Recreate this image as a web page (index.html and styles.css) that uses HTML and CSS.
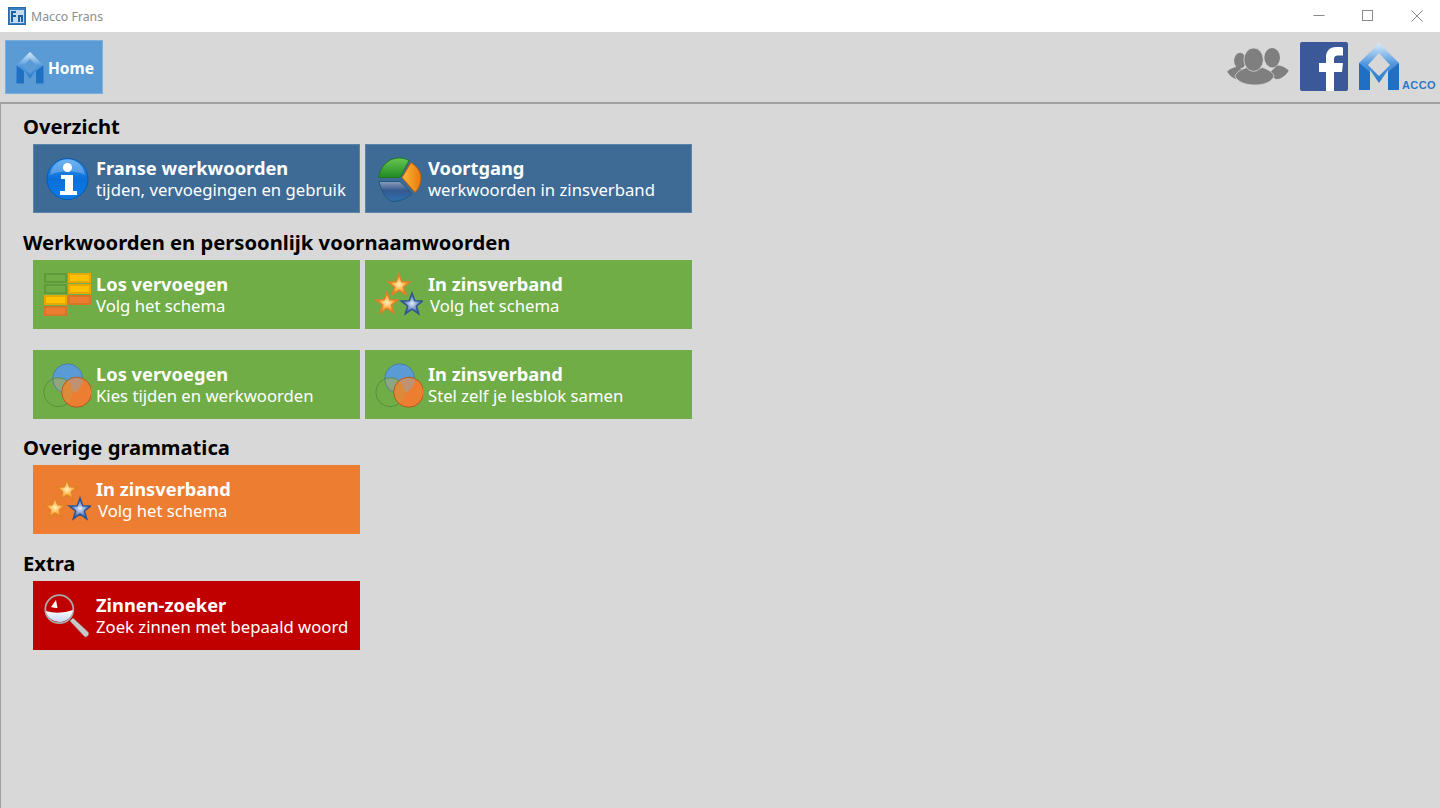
FILE: index.html
```html
<!DOCTYPE html>
<html lang="en">
<head>
    <meta charset="UTF-8">
    <meta name="viewport" content="width=device-width, initial-scale=1.0">
    <title>Macco Frans</title>
    <link rel="stylesheet" href="styles.css">
</head>
<body>
    <svg class="defs" width="0" height="0" aria-hidden="true">
        <defs>
            <linearGradient id="gInfo" x1="0" y1="0" x2="0" y2="1">
                <stop offset="0" stop-color="#3f9cf0"/>
                <stop offset="0.5" stop-color="#0a6fd8"/>
                <stop offset="1" stop-color="#0a7ce8"/>
            </linearGradient>
            <linearGradient id="gGreen" x1="0" y1="0" x2="0" y2="1">
                <stop offset="0" stop-color="#6cc653"/>
                <stop offset="1" stop-color="#1f8a22"/>
            </linearGradient>
            <linearGradient id="gOrange" x1="0" y1="0" x2="1" y2="0">
                <stop offset="0" stop-color="#ffb83c"/>
                <stop offset="1" stop-color="#e87a0a"/>
            </linearGradient>
            <linearGradient id="gBlue" x1="0" y1="0" x2="0" y2="1">
                <stop offset="0" stop-color="#8a9cb8"/>
                <stop offset="0.45" stop-color="#34598f"/>
                <stop offset="1" stop-color="#2f6fb0"/>
            </linearGradient>
            <radialGradient id="gStarOrange">
                <stop offset="0" stop-color="#fff2c0"/>
                <stop offset="0.55" stop-color="#ffb040"/>
                <stop offset="1" stop-color="#e87b1c"/>
            </radialGradient>
            <radialGradient id="gStarBlue">
                <stop offset="0" stop-color="#e4ecf8"/>
                <stop offset="0.5" stop-color="#7f9bd0"/>
                <stop offset="1" stop-color="#2f5590"/>
            </radialGradient>
            <linearGradient id="gLogo" x1="0" y1="0" x2="0" y2="1">
                <stop offset="0" stop-color="#dcecfa"/>
                <stop offset="0.45" stop-color="#4f97dd"/>
                <stop offset="1" stop-color="#1f6fc4"/>
            </linearGradient>
            <linearGradient id="gLens" x1="0" y1="0" x2="0" y2="1">
                <stop offset="0" stop-color="#fff"/>
                <stop offset="1" stop-color="#c4d8f4"/>
            </linearGradient>
            <clipPath id="clipOrange"><circle cx="33.700" cy="30.200" r="15"/></clipPath>
            <clipPath id="clipBlue"><circle cx="24.700" cy="16.800" r="15"/></clipPath>
            <path id="star" d="M0-11.500L2.700-3.720 10.940-3.550 4.370 1.420 6.760 9.300 0 4.600-6.760 9.300-4.370 1.420-10.940-3.550-2.700-3.720z"/>
            <symbol id="iconStars" viewBox="0 0 48 46">
                <use href="#star" x="24" y="13.500" fill="url(#gStarOrange)" stroke="#e0802a" stroke-width="1.500"/>
                <use href="#star" x="12" y="31.500" fill="url(#gStarOrange)" stroke="#e0802a" stroke-width="1.500"/>
                <use href="#star" x="37" y="32.500" fill="url(#gStarBlue)" stroke="#2f5590" stroke-width="1.500"/>
            </symbol>
            <symbol id="iconCircles" viewBox="0 0 48 46">
                <circle cx="24.700" cy="16.800" r="15" fill="#5b9bd5"/>
                <circle cx="15.300" cy="30.200" r="14.500" fill="#8da67e" clip-path="url(#clipBlue)"/>
                <circle cx="15.300" cy="30.200" r="14.500" fill="none" stroke="#4d8a38" stroke-opacity="0.800"/>
                <circle cx="24.700" cy="16.800" r="15" fill="none" stroke="#41719c" stroke-opacity="0.700"/>
                <circle cx="33.700" cy="30.200" r="15" fill="#ed7d31"/>
                <circle cx="24.700" cy="16.800" r="15" fill="#c09272" clip-path="url(#clipOrange)"/>
                <circle cx="15.300" cy="30.200" r="14.500" fill="#dc8a38" clip-path="url(#clipOrange)"/>
                <circle cx="33.700" cy="30.200" r="15" fill="none" stroke="#ae5a21"/>
            </symbol>
            <symbol id="iconLogo" viewBox="0 0 42 48">
                <path fill-rule="evenodd" d="M21 0L41 20v27H30V27l-9 13-9-13v20H1V20zM21 10L10 22l11 11 11-11z" fill="url(#gLogo)"/>
                <path d="M1 20l11 9v18H1zM41 20l-11 9v18h11z" fill="#1f70c4"/>
            </symbol>
        </defs>
    </svg>

    <header class="titlebar">
        <svg class="app-icon" viewBox="0 0 18 18">
            <rect x="0.500" y="0.500" width="17" height="17" fill="#3a7fc0" stroke="#2a6aa8"/>
            <rect x="2" y="3" width="14" height="13" fill="#c8dcf0"/>
            <path d="M3 4h5v2H5v2h3v2H5v5H3zM10 8h5v7h-2v-5h-1v5h-2z" fill="#1f5f9f"/>
        </svg>
        <span class="app-name">Macco Frans</span>
        <div class="window-buttons">
            <svg viewBox="0 0 12 12" class="win-btn"><path d="M0.500 5.500h11" stroke="#8a8a8a" fill="none"/></svg>
            <svg viewBox="0 0 12 12" class="win-btn"><rect x="0.500" y="0.500" width="10" height="10" stroke="#8a8a8a" fill="none"/></svg>
            <svg viewBox="0 0 12 12" class="win-btn"><path d="M0.500 0.500l11 11M11.500 0.500l-11 11" stroke="#8a8a8a" fill="none"/></svg>
        </div>
    </header>

    <nav class="toolbar">
        <a class="home-btn">
            <svg class="home-logo"><use href="#iconLogo"/></svg>
            <span>Home</span>
        </a>
        <div class="toolbar-right">
            <svg class="users-icon" viewBox="0 0 64 40">
                <g fill="#7f7f7f">
                    <ellipse cx="13" cy="14" rx="6" ry="8"/>
                    <ellipse cx="46" cy="11" rx="8" ry="10"/>
                    <path d="M0 25c3-3 7-4 11-5l8 7-7 6c-6 0-10-4-12-8zM63 24c-3-3-8-5-12-5l-9 9 8 5c6 0 11-5 13-9z"/>
                    <path d="M20 21c-6 2-11 5-12 9 2 5 9 9 20 9s18-4 20-9c-1-4-6-7-12-9l-8 3z" stroke="#d8d8d8" stroke-width="0.800"/>
                    <ellipse cx="27" cy="13" rx="10" ry="12" stroke="#d8d8d8" stroke-width="0.800"/>
                </g>
            </svg>
            <svg class="fb-icon" viewBox="0 0 48 49">
                <rect width="48" height="49" rx="2" fill="#3b5998"/>
                <path d="M26 49V30h-7v-9h7v-6c0-6 4-10 10-10 3 0 6 .2 7 .4v8h-5c-3 0-4 1.500-4 4V21h9l-1 9h-8v19z" fill="#fff"/>
            </svg>
            <div class="macco-logo">
                <svg><use href="#iconLogo"/></svg>
                <span>ACCO</span>
            </div>
        </div>
    </nav>

    <main class="content">
        <section class="group">
            <h2>Overzicht</h2>
            <div class="tiles">
                <a class="tile tile-blue">
                    <svg class="tile-icon" viewBox="0 0 48 46">
                        <circle cx="24.500" cy="23" r="20.500" fill="url(#gInfo)" stroke="#0a58b0"/>
                        <path d="M7 19C9 9 16 3.500 24.500 3.500S40 9 42 19c-10-5-25-5-35 0z" fill="#fff" fill-opacity="0.25"/>
                        <circle cx="24.500" cy="11.500" r="4.500" fill="#fff"/>
                        <path d="M18 19h12v16h4v4H17v-4h5V23h-4z" fill="#fff"/>
                    </svg>
                    <span class="tile-text"><b>Franse werkwoorden</b><span>tijden, vervoegingen en gebruik</span></span>
                </a>
                <a class="tile tile-blue">
                    <svg class="tile-icon" viewBox="-3 -1.500 48 46">
                        <path d="M.7 20C2 10 9 2 18 .7c5-.7 9 0 13 2.300L22 20z" fill="url(#gGreen)" stroke="#1f7a20"/>
                        <path d="M33 5c6 4 10 9 10 15 0 6-2 11-6 15L24 20z" fill="url(#gOrange)" stroke="#b85a10"/>
                        <path d="M1 24h21l12 12c-5 5-12 8-19 8C8 43 3 33 1 24z" fill="url(#gBlue)" stroke="#1f5a7a"/>
                    </svg>
                    <span class="tile-text"><b>Voortgang</b><span>werkwoorden in zinsverband</span></span>
                </a>
            </div>
        </section>

        <section class="group">
            <h2>Werkwoorden en persoonlijk voornaamwoorden</h2>
            <div class="tiles">
                <a class="tile tile-green">
                    <span class="schema-icon">
                        <i class="cell cell-green"></i><i class="cell cell-yellow"></i>
                        <i class="cell cell-green"></i><i class="cell cell-yellow"></i>
                        <i class="cell cell-yellow"></i><i class="cell cell-orange"></i>
                        <i class="cell cell-orange"></i>
                    </span>
                    <span class="tile-text"><b>Los vervoegen</b><span>Volg het schema</span></span>
                </a>
                <a class="tile tile-green">
                    <svg class="tile-icon"><use href="#iconStars"/></svg>
                    <span class="tile-text"><b>In zinsverband</b><span class="nudge">Volg het schema</span></span>
                </a>
            </div>
            <div class="tiles">
                <a class="tile tile-green">
                    <svg class="tile-icon"><use href="#iconCircles"/></svg>
                    <span class="tile-text"><b>Los vervoegen</b><span>Kies tijden en werkwoorden</span></span>
                </a>
                <a class="tile tile-green">
                    <svg class="tile-icon"><use href="#iconCircles"/></svg>
                    <span class="tile-text"><b>In zinsverband</b><span>Stel zelf je lesblok samen</span></span>
                </a>
            </div>
        </section>

        <section class="group group-tight">
            <h2>Overige grammatica</h2>
            <div class="tiles">
                <a class="tile tile-orange">
                    <svg class="tile-icon"><use href="#iconStars"/></svg>
                    <span class="tile-text"><b>In zinsverband</b><span class="nudge">Volg het schema</span></span>
                </a>
            </div>
        </section>

        <section class="group">
            <h2>Extra</h2>
            <div class="tiles">
                <a class="tile tile-red">
                    <svg class="tile-icon" viewBox="0 0 48 46">
                        <path d="M27 28l3-3 15 14c2 2-1 6-3.500 4.500z" fill="#c8c8c8" stroke="#8a8a8a" stroke-width="0.500"/>
                        <circle cx="16.300" cy="16.200" r="14" fill="#c00000" stroke="#a8a8a8" stroke-width="1.800"/>
                        <path d="M2.800 18Q16 22 30 17A13.800 13.800 0 0 1 2.800 18z" fill="url(#gLens)"/>
                        <path d="M8 14l5-7 1.500 8Q11 15 8 14z" fill="#fff"/>
                    </svg>
                    <span class="tile-text"><b>Zinnen-zoeker</b><span>Zoek zinnen met bepaald woord</span></span>
                </a>
            </div>
        </section>
    </main>
</body>
</html>
```

FILE: styles.css
```css
html, body {
    height: 100%;
}
body {
    margin: 0;
    display: flex;
    flex-direction: column;
    overflow: hidden;
    font-family: "Noto Sans", sans-serif;
    background: #d8d8d8;
}
.defs {
    position: absolute;
}
.titlebar {
    height: 32px;
    flex-shrink: 0;
    display: flex;
    align-items: center;
    padding-left: 8px;
    background: #fff;
}
.app-icon {
    width: 18px;
    height: 18px;
    margin-right: 5px;
}
.app-name {
    font-size: 12.3px;
    color: #8c8c8c;
}
.window-buttons {
    margin-left: auto;
    display: flex;
    gap: 37px;
    padding-right: 17px;
}
.win-btn {
    width: 12px;
    height: 12px;
}
.toolbar {
    height: 72px;
    box-sizing: border-box;
    flex-shrink: 0;
    display: flex;
    align-items: flex-start;
    justify-content: space-between;
    border-bottom: 2px solid #a0a0a0;
    padding: 8px 4px 0 5px;
}
.home-btn {
    width: 98px;
    height: 54px;
    box-sizing: border-box;
    display: flex;
    align-items: center;
    padding: 1px 0 0 10px;
    gap: 4px;
    background: #5b9bd5;
    border: 1px solid #7aaede;
    color: #fff;
    font-size: 15.5px;
    font-weight: bold;
}
.home-logo {
    width: 28px;
    height: 32px;
    margin-top: 1px;
}
.toolbar-right {
    display: flex;
    align-items: flex-start;
    gap: 10px;
    padding-top: 2px;
}
.users-icon {
    width: 63px;
    height: 39px;
    margin-top: 5px;
}
.fb-icon {
    width: 48px;
    height: 49px;
}
.macco-logo {
    display: flex;
    align-items: flex-end;
    width: 78px;
    height: 48px;
    margin-top: 1px;
    color: #2a7ac8;
}
.macco-logo svg {
    width: 42px;
    height: 48px;
    flex-shrink: 0;
}
.macco-logo span {
    font-family: "Liberation Sans", sans-serif;
    font-size: 11px;
    font-weight: bold;
    letter-spacing: 0.4px;
    line-height: 11px;
    margin-left: 2px;
}
.content {
    flex: 1;
    border-left: 1px solid #a0a0a0;
    padding: 6px 0 0 32px;
}
.group + .group {
    margin-top: 13px;
}
.group + .group-tight {
    margin-top: 12px;
}
.group h2 {
    margin: 0 0 0 -10px;
    height: 34px;
    line-height: 32px;
    font-size: 20.2px;
    font-weight: bold;
    color: #000;
}
.tiles {
    display: flex;
    gap: 5px;
}
.tiles + .tiles {
    margin-top: 21px;
}
.tile {
    width: 327px;
    height: 69px;
    box-sizing: border-box;
    display: flex;
    align-items: center;
    padding-left: 10px;
    color: #fff;
}
.tile-blue {
    background: #3d6b96;
    box-shadow: inset 0 0 0 1px #5a83a8;
}
.tile-green {
    background: #70ad47;
}
.tile-orange {
    background: #ed7d31;
}
.tile-red {
    background: #c00000;
}
.tile-icon {
    width: 48px;
    height: 46px;
    flex-shrink: 0;
    margin-right: 5px;
}
.tile-text {
    display: flex;
    flex-direction: column;
    padding-top: 2px;
    white-space: nowrap;
}
.tile-text b {
    font-size: 18.3px;
    line-height: 20px;
}
.tile-text span {
    font-size: 16.7px;
    line-height: 24px;
}
.nudge {
    margin-left: 2px;
}
.schema-icon {
    width: 47px;
    display: grid;
    grid-template-columns: 23px 23px;
    gap: 1px 1px;
    flex-shrink: 0;
    margin: 0 5px 0 1px;
}
.cell {
    height: 10px;
    box-sizing: border-box;
    border: 2px solid rgba(150, 100, 20, 0.25);
}
.cell-green {
    background: #70ad47;
    border-color: #5f9a3c;
}
.cell-yellow {
    background: #ffc000;
}
.cell-orange {
    background: #ed7d31;
}
```
